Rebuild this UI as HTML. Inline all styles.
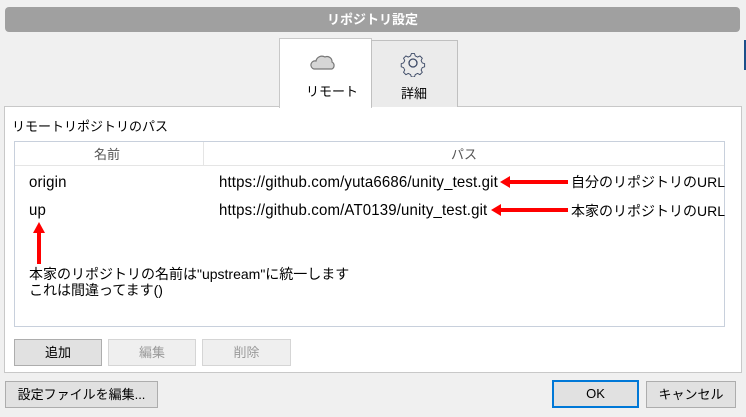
<!DOCTYPE html>
<html><head><meta charset="utf-8"><style>
*{box-sizing:border-box;margin:0;padding:0}
body{width:746px;height:417px;background:#f0f0f0;position:relative;overflow:hidden;font-family:"Liberation Sans","Noto Sans CJK JP",sans-serif;font-size:13px;color:#000}
.a{position:absolute}
.title{left:5px;top:7px;width:735px;height:25px;background:#a0a0a0;border-radius:4px;color:#fff;font-weight:bold;text-align:center;line-height:25px;font-size:13px}
.btn{position:absolute;border:1px solid #adadad;background:#e1e1e1;text-align:center;font-size:13px}
.dis{border-color:#d5d5d5;background:#efefef;color:#9a9a9a}
.t{white-space:nowrap;line-height:1.2}
.u{font-size:15px;letter-spacing:0.15px;transform:scaleY(1.05)}
</style></head><body>
<div class="a title">リポジトリ設定</div>
<div class="a" style="left:744px;top:40px;width:2px;height:30px;background:#1c4f8a"></div>
<div class="a" style="left:4px;top:106px;width:738px;height:267px;background:#fff;border:1px solid #c8c8c8"></div>
<div class="a" style="left:279px;top:38px;width:93px;height:70px;background:#fff;border:1px solid #c8c8c8;border-bottom:none"></div>
<div class="a" style="left:371px;top:40px;width:87px;height:67px;background:#ebebeb;border:1px solid #c0c0c0;border-bottom:none"></div>
<svg class="a" style="left:308px;top:52px" width="30" height="20"><path d="M6 17 H24 A4 4 0 0 0 24 10 A5 5 0 0 0 17 5 A6 6 0 0 0 8 9 A4 4 0 0 0 6 17 Z" fill="#d6d6d6" stroke="#777" stroke-width="1.2"/></svg>
<svg class="a" style="left:399px;top:49px" width="28" height="28" viewBox="0 0 28 28"><path d="M12 2h4l1 3 3 1.5 3-1.5 3 3-1.5 3 1.5 3 3 1v4l-3 1-1.5 3 1.5 3-3 3-3-1.5-3 1.5-1 3h-4l-1-3-3-1.5-3 1.5-3-3 1.5-3-1.5-3-3-1v-4l3-1 1.5-3-1.5-3 3-3 3 1.5 3-1.5z" fill="none" stroke="#3d4a66" stroke-width="1.2" transform="translate(3 3) scale(0.78)"/><circle cx="14" cy="14" r="4" fill="none" stroke="#3d4a66" stroke-width="1.3"/></svg>
<div class="a t" style="left:306px;top:84px">リモート</div>
<div class="a t" style="left:401px;top:86px">詳細</div>
<div class="a t" style="left:12px;top:119px">リモートリポジトリのパス</div>
<div class="a" style="left:14px;top:141px;width:711px;height:186px;border:1px solid #c8d0dc;background:#fff"></div>
<div class="a" style="left:15px;top:142px;width:709px;height:24px;border-bottom:1px solid #e5e5e5"></div>
<div class="a" style="left:203px;top:142px;width:1px;height:24px;background:#e5e5e5"></div>
<div class="a t" style="left:94px;top:147px;color:#555">名前</div>
<div class="a t" style="left:451px;top:147px;color:#555">パス</div>
<div class="a t u" style="left:29px;top:174px">origin</div>
<div class="a t u" style="left:219px;top:174px">https://github.com/yuta6686/unity_test.git</div>
<div class="a t u" style="left:29px;top:202px">up</div>
<div class="a t u" style="left:219px;top:202px">https://github.com/AT0139/unity_test.git</div>
<svg class="a" style="left:0;top:0" width="746" height="417"><g fill="red"><rect x="508" y="180" width="60" height="4"/><path d="M500 182 L510 176 L510 188Z"/><rect x="500" y="208" width="68" height="4"/><path d="M491 210 L501 204 L501 216Z"/><rect x="37" y="232" width="4" height="32"/><path d="M39 222 L33 233 L45 233Z"/></g></svg>
<div class="a t" style="left:571px;top:174px;font-size:14px">自分のリポジトリのURL</div>
<div class="a t" style="left:571px;top:203px;font-size:14px">本家のリポジトリのURL</div>
<div class="a t" style="left:29px;top:266px;font-size:14px;line-height:16px">本家のリポジトリの名前は"upstream"に統一します<br>これは間違ってます()</div>
<div class="btn" style="left:14px;top:339px;width:88px;height:27px;line-height:25px">追加</div>
<div class="btn dis" style="left:108px;top:339px;width:88px;height:27px;line-height:25px">編集</div>
<div class="btn dis" style="left:202px;top:339px;width:89px;height:27px;line-height:25px">削除</div>
<div class="btn" style="left:5px;top:381px;width:153px;height:27px;line-height:25px">設定ファイルを編集...</div>
<div class="btn" style="left:552px;top:380px;width:87px;height:28px;line-height:24px;border:2px solid #0078d7">OK</div>
<div class="btn" style="left:646px;top:381px;width:90px;height:27px;line-height:25px">キャンセル</div>
</body></html>
